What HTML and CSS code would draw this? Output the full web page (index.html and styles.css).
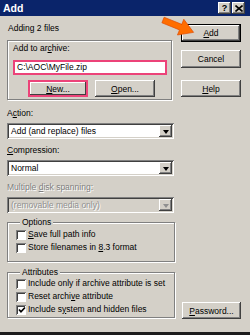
FILE: index.html
```html
<!DOCTYPE html>
<html>
<head>
<meta charset="utf-8">
<title>Add</title>
<link rel="stylesheet" href="styles.css">
</head>
<body>

<div class="window">
	<div class="titlebar">
		<span class="title">Add</span>
		<span class="tbtn help">?</span>
		<span class="tbtn close">
			<svg width="8" height="7" viewBox="0 0 8 7"><path d="M0.5 0.5 L7.5 6.5 M7.5 0.5 L0.5 6.5" stroke="#000" stroke-width="1.6"/></svg>
		</span>
	</div>

	<div class="dialog">
		<div class="left">
			<div class="adding">Adding 2 files</div>

			<div class="panel archive">
				<div class="label">Add to ar<u>c</u>hive:</div>
				<div class="field mark">C:\AOC\MyFile.zip</div>
				<div class="row">
					<button class="btn mark-btn"><u>N</u>ew...</button>
					<button class="btn"><u>O</u>pen...</button>
				</div>
			</div>

			<div class="label action">A<u>c</u>tion:</div>
			<div class="combo"><span class="val">Add (and replace) files</span><span class="drop"><i></i></span></div>

			<div class="label"><u>C</u>ompression:</div>
			<div class="combo"><span class="val">Normal</span><span class="drop"><i></i></span></div>

			<div class="label off">Multiple <u>d</u>isk spanning:</div>
			<div class="combo off"><span class="val">(removable media only)</span><span class="drop"><i></i></span></div>

			<fieldset class="group options">
				<legend>Options</legend>
				<div class="check"><span class="box"></span><span><u>S</u>ave full path info</span></div>
				<div class="check"><span class="box"></span><span>Store filenames in <u>8</u>.3 format</span></div>
			</fieldset>

			<fieldset class="group attrs">
				<legend>Attributes</legend>
				<div class="check first"><span class="box"></span><span>Include only if archive attribute is set</span></div>
				<div class="check"><span class="box"></span><span>Reset archi<u>v</u>e attribute</span></div>
				<div class="check"><span class="box on">
					<svg width="8" height="8" viewBox="0 0 8 8"><path d="M1 3.5 L3 5.8 L7 1.5" fill="none" stroke="#000" stroke-width="1.7"/></svg>
				</span><span>Include s<u>y</u>stem and hidden files</span></div>
			</fieldset>
		</div>

		<div class="right">
			<button class="btn default add"><u>A</u>dd</button>
			<button class="btn cancel">Cancel</button>
			<button class="btn helpbtn"><u>H</u>elp</button>
			<button class="btn password"><u>P</u>assword...</button>
		</div>
	</div>

	<!-- callout arrow pointing at the Add button -->
	<svg class="arrow" width="44" height="28" viewBox="0 0 44 28">
		<g transform="translate(3 5) rotate(22)">
			<path d="M0 -3 L19 -3 L19 -8.5 L33 0 L19 8.5 L19 3 L0 3 Z" fill="#ff6d00" stroke="#e04a00" stroke-width="0.6"/>
		</g>
	</svg>
</div>

</body>
</html>
```

FILE: styles.css
```css
html, body {
	margin: 0;
	padding: 0;
	background: #d4d0c8;
}

body {
	font-family: "Liberation Sans", Arial, sans-serif;
	font-size: 8.5px;
	color: #000;
}

u {
	text-decoration-thickness: 1px;
	text-underline-offset: 1px;
}

.window {
	position: relative;
	box-sizing: border-box;
	width: 250px;
	height: 335px;
	border-bottom: 3px solid #1c1c1c;
	overflow: hidden;
}

/* title bar */
.titlebar {
	height: 16px;
	background: #0a246a;
	display: flex;
	align-items: center;
	padding: 0 5px 0 3px;
}
.titlebar .title {
	flex: 1;
	color: #fff;
	font-weight: bold;
	font-size: 10.5px;
}
.tbtn {
	box-sizing: border-box;
	width: 13px;
	height: 12px;
	margin-left: 1px;
	background: #d4d0c8;
	box-shadow: inset -1px -1px #404040, inset 1px 1px #fff, inset -2px -2px #808080;
	display: flex;
	align-items: center;
	justify-content: center;
	font-weight: bold;
	font-size: 9px;
	line-height: 1;
}

/* two columns: controls and the buttons */
.dialog {
	display: grid;
	grid-template-columns: 168px 60px;
	column-gap: 6px;
	padding: 0 0 0 7px;
}

.left {
	display: flex;
	flex-direction: column;
	padding-bottom: 1px;
}

.right {
	display: flex;
	flex-direction: column;
}

.adding {
	margin-top: 6px;
	line-height: 12px;
	padding-left: 1px;
}

.label {
	line-height: 12px;
}
.label.off {
	color: #808080;
	text-shadow: 1px 1px 0 #fff;
}

/* Add to archive panel */
.panel {
	box-sizing: border-box;
	width: 165px;
	height: 60px;
	margin-top: 6px;
	border: 1px solid #808080;
	box-shadow: inset 1px 1px #fff, 1px 1px #fff;
	padding: 1px 0 0 5px;
}
.field {
	box-sizing: border-box;
	width: 154px;
	height: 15px;
	margin-top: 6px;
	background: #fff;
	line-height: 11px;
	padding-left: 2px;
}
.mark {
	border: 2px solid #ec4379;
}
.row {
	display: flex;
	gap: 7px;
	margin-top: 5px;
	padding-left: 15px;
}

/* classic raised buttons */
.btn {
	box-sizing: border-box;
	width: 60px;
	height: 17px;
	padding: 0;
	border: none;
	background: #d4d0c8;
	font: inherit;
	color: #000;
	box-shadow: inset -1px -1px #404040, inset 1px 1px #fff, inset -2px -2px #808080;
}
.btn.mark-btn {
	border: 2px solid #ec4379;
	box-shadow: inset -1px -1px #404040, inset 1px 1px #fff;
}
.btn.default {
	border: 1px solid #000;
	height: 18px;
}
.add {
	margin-top: 8px;
}
.cancel {
	margin-top: 8px;
	height: 18px;
}
.helpbtn {
	margin-top: 12px;
}
.password {
	margin-top: auto;
	width: 59px;
	margin-left: 1px;
}

/* drop-down lists */
.action {
	margin-top: 7px;
}
.combo {
	box-sizing: border-box;
	display: flex;
	width: 167px;
	height: 16px;
	margin-top: 4px;
	margin-bottom: 5px;
	background: #fff;
	box-shadow: inset 1px 1px #808080, inset -1px -1px #fff, inset 2px 2px #404040, inset -2px -2px #d4d0c8;
	padding: 2px;
}
.combo .val {
	flex: 1;
	line-height: 12px;
	padding-left: 2px;
}
.combo .drop {
	width: 13px;
	background: #d4d0c8;
	box-shadow: inset -1px -1px #404040, inset 1px 1px #fff, inset -2px -2px #808080;
	display: flex;
	align-items: center;
	justify-content: center;
}
.combo .drop i {
	width: 0;
	height: 0;
	border-left: 3.5px solid transparent;
	border-right: 3.5px solid transparent;
	border-top: 4px solid #000;
	margin-top: 1px;
}
.combo.off {
	background: #d4d0c8;
	color: #909090;
	text-shadow: 1px 1px 0 #fff;
}
.combo.off .drop i {
	border-top-color: #909090;
}

/* option groups */
.group {
	box-sizing: border-box;
	width: 168px;
	margin: 0;
	padding: 0 0 0 8px;
	border: 1px solid #808080;
	box-shadow: inset 1px 1px #fff, 1px 1px #fff;
}
.group legend {
	padding: 0 2px;
	margin-left: 4px;
	line-height: 12px;
	background: #d4d0c8;
}
.options {
	margin-top: -2px;
	height: 46px;
}
.attrs {
	margin-top: 4px;
	height: 52px;
}
.check {
	display: flex;
	align-items: center;
	height: 13px;
	line-height: 13px;
	white-space: nowrap;
}
.check.first {
	margin-top: -1px;
}
.check .box {
	box-sizing: border-box;
	width: 10px;
	height: 10px;
	margin-right: 2px;
	background: #fff;
	box-shadow: inset 1px 1px #808080, inset -1px -1px #fff, inset 2px 2px #404040;
	display: flex;
	align-items: center;
	justify-content: center;
}
.check .box svg {
	margin: 1px 0 0 1px;
}

/* callout arrow */
.arrow {
	position: absolute;
	left: 160px;
	top: 15px;
}
```
